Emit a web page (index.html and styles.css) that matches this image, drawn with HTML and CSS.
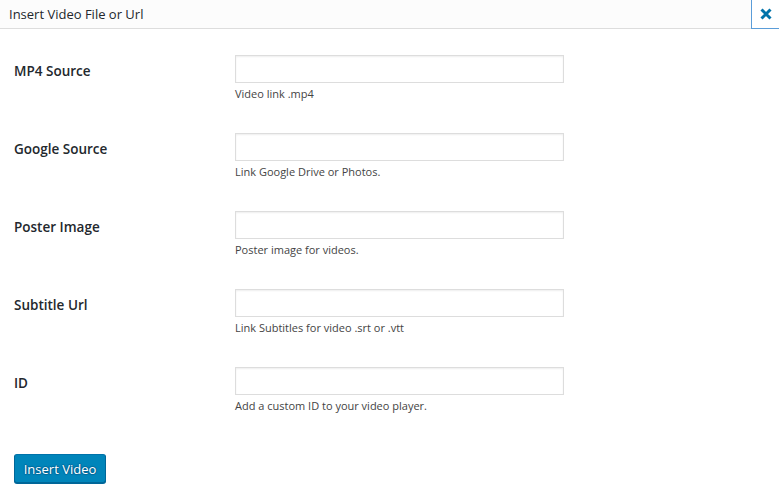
FILE: index.html
```html
<!DOCTYPE html>
<html>
<head>
<meta charset="utf-8">
<link rel="stylesheet" href="styles.css">
</head>
<body>
<div class="modal">
  <div class="modal-header">
    <span class="modal-title">Insert Video File or Url</span>
    <button class="close-btn" aria-label="Close">
      <svg width="12" height="12" viewBox="0 0 12 12"><path d="M1.5 1.5 L10.5 10.5 M10.5 1.5 L1.5 10.5" stroke="#0073aa" stroke-width="3" stroke-linecap="butt"/></svg>
    </button>
  </div>
  <div class="modal-body">
    <div class="form-row">
      <label class="form-label">MP4 Source</label>
      <div class="form-field">
        <input class="text-input" type="text">
        <p class="description">Video link .mp4</p>
      </div>
    </div>
    <div class="form-row">
      <label class="form-label">Google Source</label>
      <div class="form-field">
        <input class="text-input" type="text">
        <p class="description">Link Google Drive or Photos.</p>
      </div>
    </div>
    <div class="form-row">
      <label class="form-label">Poster Image</label>
      <div class="form-field">
        <input class="text-input" type="text">
        <p class="description">Poster image for videos.</p>
      </div>
    </div>
    <div class="form-row">
      <label class="form-label">Subtitle Url</label>
      <div class="form-field">
        <input class="text-input" type="text">
        <p class="description">Link Subtitles for video .srt or .vtt</p>
      </div>
    </div>
    <div class="form-row">
      <label class="form-label">ID</label>
      <div class="form-field">
        <input class="text-input" type="text">
        <p class="description">Add a custom ID to your video player.</p>
      </div>
    </div>
    <div class="actions">
      <button class="btn-primary">Insert Video</button>
    </div>
  </div>
</div>
</body>
</html>
```

FILE: styles.css
```css
* { box-sizing: border-box; }
html, body { margin: 0; padding: 0; background: #fff; }
body {
  font-family: "Open Sans", "Noto Sans", sans-serif;
  color: #23282d;
  width: 779px;
  height: 502px;
  overflow: hidden;
}
.modal-header {
  height: 29px;
  background: #fcfcfc;
  border-bottom: 1px solid #dddddd;
  display: flex;
  align-items: center;
  justify-content: space-between;
}
.modal-title {
  font-size: 13px;
  padding-left: 9px;
  color: #23282d;
  line-height: 28px;
}
.close-btn {
  width: 28px;
  height: 29px;
  align-self: flex-start;
  background: #fff;
  border: none;
  border-left: 1px solid #5b9dd9;
  border-bottom: 1px solid #5b9dd9;
  padding: 0;
  margin: 0 0 -1px 0;
  display: flex;
  align-items: center;
  justify-content: center;
}
.modal-body {
  padding: 11px 0 0 14px;
}
.form-row {
  display: grid;
  grid-template-columns: 221px 329px;
  height: 78px;
}
.form-label {
  font-size: 13.5px;
  font-weight: 600;
  padding-top: 22px;
  line-height: 18px;
  color: #23282d;
}
.form-field {
  padding-top: 15px;
}
.text-input {
  display: block;
  width: 329px;
  height: 28px;
  margin: 0;
  border: 1px solid #dddddd;
  box-shadow: inset 0 1px 2px rgba(0,0,0,0.07);
  background: #fff;
  outline: none;
}
.description {
  margin: 3px 0 0 0;
  font-size: 11px;
  line-height: 15px;
  color: #444;
}
.actions {
  padding-top: 24px;
}
.btn-primary {
  width: 92px;
  height: 29px;
  background: #0085ba;
  border: 1px solid #0073aa;
  border-color: #0073aa #006799 #006799;
  border-radius: 3px;
  box-shadow: 0 1px 0 #006799;
  color: #fff;
  font-family: "Open Sans", "Noto Sans", sans-serif;
  font-size: 13px;
  text-shadow: 0 -1px 1px #006799, 1px 0 1px #006799, 0 1px 1px #006799, -1px 0 1px #006799;
  padding: 0;
  cursor: pointer;
}
```
